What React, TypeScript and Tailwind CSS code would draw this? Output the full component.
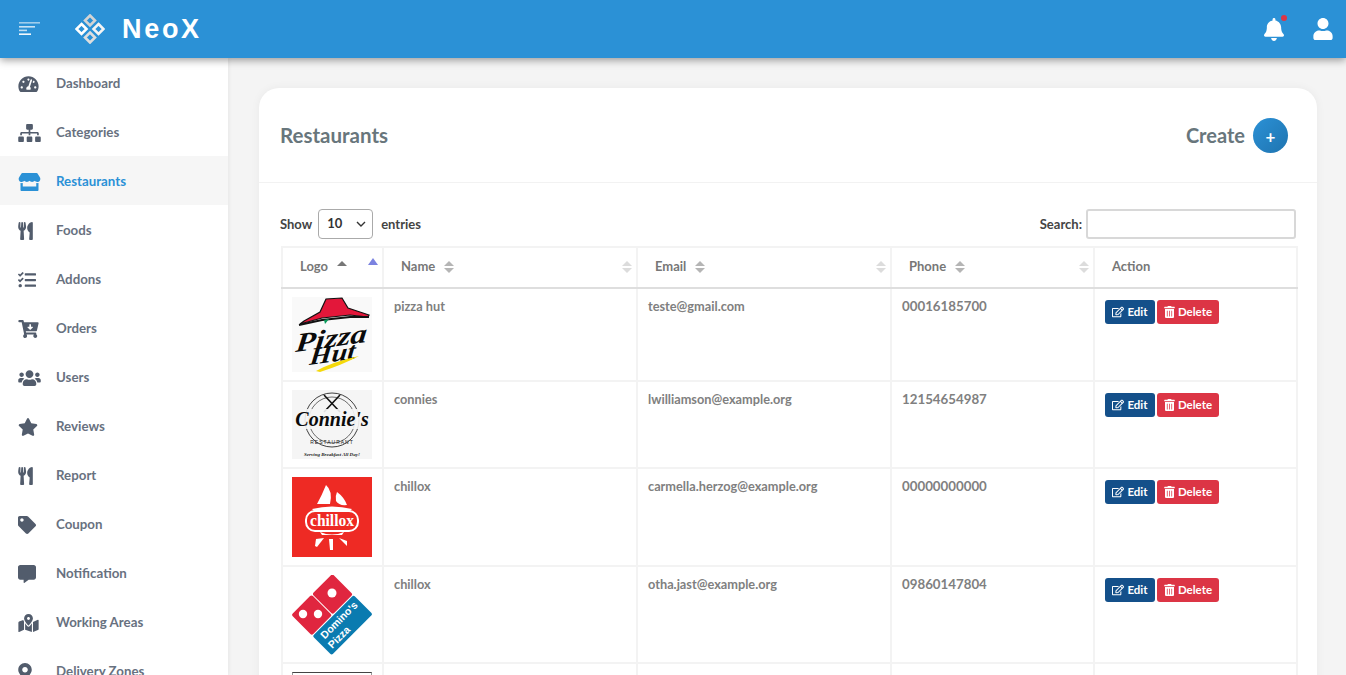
import React from "react";
import {
  FaTachometerAlt, FaSitemap, FaStore, FaUtensils, FaTasks, FaCartArrowDown, FaUsers, FaStar,
  FaTag, FaCommentAlt, FaMapMarkedAlt, FaMapMarkerAlt, FaBell, FaUser, FaRegEdit, FaTrashAlt,
} from "react-icons/fa";

const nav: [string, React.ComponentType<{ className?: string }>, string, boolean?][] = [
  ["Dashboard", FaTachometerAlt, "w-[21px]"],
  ["Categories", FaSitemap, "w-[23px]"],
  ["Restaurants", FaStore, "w-[23px]", true],
  ["Foods", FaUtensils, "w-[15px]"],
  ["Addons", FaTasks, "w-[18px]"],
  ["Orders", FaCartArrowDown, "w-[21px]"],
  ["Users", FaUsers, "w-[23px]"],
  ["Reviews", FaStar, "w-[20px]"],
  ["Report", FaUtensils, "w-[15px]"],
  ["Coupon", FaTag, "w-[18px]"],
  ["Notification", FaCommentAlt, "w-[18px]"],
  ["Working Areas", FaMapMarkedAlt, "w-[21px]"],
  ["Delivery Zones", FaMapMarkerAlt, "w-[14px]"],
];

function Sort({ up = "#b5b5b5", down = "#b5b5b5", w = 10 }: { up?: string; down?: string; w?: number }) {
  return (
    <svg width={w} height="12" viewBox="0 0 10 12" className="block">
      <path d="M5 0 L10 5 H0 Z" fill={up} />
      <path d="M5 12 L10 7 H0 Z" fill={down} />
    </svg>
  );
}

function Diamond() {
  const d = (x: number, y: number, c: string) => (
    <path d={`M${x} ${y - 5} L${x + 5} ${y} L${x} ${y + 5} L${x - 5} ${y} Z`} fill="none" stroke={c} strokeWidth="2.6" />
  );
  return (
    <svg width="30" height="30" viewBox="0 0 30 30">
      {d(15, 6.5, "#d4d4d4")}
      {d(23.5, 15, "#f4f4f4")}
      {d(15, 23.5, "#dedede")}
      {d(6.5, 15, "#ffffff")}
    </svg>
  );
}

function PizzaHut() {
  return (
    <svg width="80" height="75" viewBox="0 0 80 75" className="block">
      <rect width="80" height="75" fill="#f9f9f9" />
      <path d="M12 24 L28 15 L34 2 L50 1 L56 11 L77 18 L76 20 L58 18 L30 21 L8 27 Z" fill="#e3173a" stroke="#111" strokeWidth="1.2" />
      <path d="M7 28 L30 23 L58 20 L77 20" fill="none" stroke="#111" strokeWidth="2" />
      <path d="M32 23 L37 22 L33 27 Z" fill="#0a9a5b" />
      <text transform="translate(3 55) rotate(-8) skewX(-14)" fontFamily="'Liberation Serif',serif" fontStyle="italic" fontWeight="700" fontSize="26" textLength="72" lengthAdjust="spacingAndGlyphs" fill="#0a0a0a">Pizza</text>
      <text transform="translate(17 68) rotate(-8) skewX(-14)" fontFamily="'Liberation Serif',serif" fontStyle="italic" fontWeight="700" fontSize="24" textLength="46" lengthAdjust="spacingAndGlyphs" fill="#0a0a0a">Hut</text>
      <path d="M24 74 Q40 65 67 59 Q50 68 28 75 Z" fill="#f5d90a" />
    </svg>
  );
}

function Connies() {
  return (
    <svg width="80" height="69" viewBox="0 0 80 69" className="block">
      <rect width="80" height="69" fill="#f5f5f5" />
      <circle cx="40" cy="30" r="27" fill="none" stroke="#111" strokeWidth="0.8" />
      <circle cx="40" cy="30" r="23" fill="none" stroke="#111" strokeWidth="0.6" />
      <path d="M32 5 L48 22 M48 5 L32 22" stroke="#111" strokeWidth="1.6" />
      <rect x="0" y="19" width="80" height="20" fill="#f5f5f5" opacity="0.9" />
      <text x="40" y="36" textAnchor="middle" fontFamily="'Liberation Serif',serif" fontStyle="italic" fontWeight="700" fontSize="20" fill="#0a0a0a">Connie's</text>
      <text x="40" y="54" textAnchor="middle" fontFamily="'Liberation Sans',sans-serif" fontSize="5" letterSpacing="1" fill="#222">RESTAURANT</text>
      <text x="40" y="66" textAnchor="middle" fontFamily="'Liberation Serif',serif" fontStyle="italic" fontWeight="700" fontSize="5" fill="#222">Serving Breakfast All Day!</text>
    </svg>
  );
}

function Chillox() {
  return (
    <svg width="80" height="80" viewBox="0 0 80 80" className="block">
      <rect width="80" height="80" fill="#ee2a24" />
      <path d="M25 27 Q30 18 34 8 Q41 14 38 27 Z" fill="#fff" />
      <path d="M45 15 Q52 20 55 28 Q47 29 44 24 Q43 19 45 15 Z" fill="#fff" />
      <path d="M20 32 Q40 27 60 32 L56 36 L24 36 Z" fill="#fff" />
      <rect x="14" y="34" width="52" height="20" rx="9" fill="#ee2a24" stroke="#fff" strokeWidth="2" />
      <text x="40" y="49" textAnchor="middle" fontFamily="'Liberation Serif',serif" fontWeight="700" fontSize="16" textLength="44" lengthAdjust="spacingAndGlyphs" fill="#fff">chillox</text>
      <path d="M28 55 Q40 60 52 55 L50 58 L30 58 Z" fill="#fff" />
      <path d="M37 62 H41 L41 73 H38 Z" fill="#fff" />
      <path d="M24 62 L32 61 L25 70 L23 69 Z" fill="#fff" />
      <path d="M47 61 L55 64 L55 69 Z" fill="#fff" />
    </svg>
  );
}

function Dominos() {
  return (
    <svg width="80" height="80" viewBox="0 0 80 80" className="block">
      <g transform="rotate(-45 40 39.5)">
        <rect x="11" y="11" width="28.5" height="29" rx="2" fill="#e0263f" />
        <rect x="40.5" y="11" width="28.5" height="29" rx="2" fill="#e0263f" />
        <rect x="11" y="41" width="58" height="27" rx="2" fill="#0a7bb0" />
        <text x="41" y="52" textAnchor="middle" fontFamily="'Liberation Sans',sans-serif" fontWeight="700" fontSize="10.5" fill="#fff">Domino's</text>
        <text x="29" y="64" textAnchor="middle" fontFamily="'Liberation Sans',sans-serif" fontWeight="700" fontSize="10.5" fill="#fff">Pizza</text>
      </g>
      <circle cx="40" cy="18" r="4.5" fill="#fff" />
      <circle cx="11" cy="39" r="4.2" fill="#fff" />
      <circle cx="26" cy="39" r="4.2" fill="#fff" />
    </svg>
  );
}

const rows: { h: string; logo: React.ReactNode; name: string; email: string; phone: string }[] = [
  { h: "h-[93px]", logo: <PizzaHut />, name: "pizza hut", email: "teste@gmail.com", phone: "00016185700" },
  { h: "h-[87px]", logo: <Connies />, name: "connies", email: "lwilliamson@example.org", phone: "12154654987" },
  { h: "h-[98px]", logo: <Chillox />, name: "chillox", email: "carmella.herzog@example.org", phone: "00000000000" },
  { h: "h-[97px]", logo: <Dominos />, name: "chillox", email: "otha.jast@example.org", phone: "09860147804" },
];

function Th({ label, first }: { label: string; first?: boolean }) {
  return (
    <th className="relative border-2 border-[#f3f3f3] border-b-[#dedede] pl-[17px] text-left align-middle text-[13px] font-bold text-[#777]">
      <span className="flex items-center gap-[9px] pb-[2px]">
        {label}
        {first ? (
          <svg width="10" height="6" viewBox="0 0 10 6" className="mb-[6px] block"><path d="M5 0 L10 5 H0 Z" fill="#777" /></svg>
        ) : (
          <Sort />
        )}
      </span>
      {first ? (
        <span className="absolute right-[4px] top-[10px]">
          <svg width="10" height="8" viewBox="0 0 10 8" className="block"><path d="M5 0 L10 7 H0 Z" fill="#7b83e0" /></svg>
        </span>
      ) : (
        <span className="absolute right-[4px] top-[13px]">
          <Sort up="#dcdcdc" down="#dcdcdc" />
        </span>
      )}
    </th>
  );
}

export default function App() {
  return (
    <div className="flex h-screen flex-col overflow-hidden bg-[#f4f4f4] font-['Lato','Noto_Sans',sans-serif]">
      <header className="relative z-20 flex h-[58px] shrink-0 items-center bg-[#2b91d6] shadow-[0_2px_8px_rgba(0,0,0,0.4)]">
        <svg width="22" height="14" viewBox="0 0 22 14" className="ml-[19px] block">
          <rect x="0" y="0" width="21" height="1.6" fill="#fff" opacity="0.55" />
          <rect x="0" y="4" width="16" height="1.6" fill="#fff" opacity="0.75" />
          <rect x="0" y="7.6" width="8" height="1.6" fill="#fff" opacity="0.7" />
          <rect x="0" y="11.4" width="12" height="1.6" fill="#fff" opacity="0.95" />
        </svg>
        <span className="ml-[34px]"><Diamond /></span>
        <span className="ml-[17px] font-['Liberation_Sans',sans-serif] text-[27px] leading-none font-bold tracking-[2.7px] text-white">NeoX</span>
        <span className="relative ml-auto">
          <FaBell className="block h-[23px] w-[20px] text-white" />
          <span className="absolute -right-[3px] -top-[3px] h-[6px] w-[6px] rounded-full bg-[#dc3545]" />
        </span>
        <FaUser className="ml-[29px] mr-[13px] block h-[22px] w-[20px] text-white" />
      </header>
      <div className="flex min-h-0 flex-1">
        <aside className="z-10 w-[228px] shrink-0 overflow-hidden bg-white shadow-[1px_0_4px_rgba(0,0,0,0.06)]">
          {nav.map(([label, Icon, iw, active]) => (
            <div key={label} className={`flex h-[49px] items-center pl-[18px] pt-[2px] text-[13.3px] font-bold ${active ? "bg-[#f6f6f6] text-[#2b91d6]" : "text-[#68717f]"}`}>
              <span className="w-[38px]"><Icon className={`block h-[18px] ${iw} ${active ? "text-[#2b91d6]" : "text-[#525c6c]"}`} /></span>
              <span>{label}</span>
            </div>
          ))}
        </aside>
        <main className="min-w-0 flex-1 overflow-hidden pl-[31px] pr-[29px] pt-[30px]">
          <section className="h-[700px] rounded-t-[20px] bg-white shadow-[0_0_10px_rgba(0,0,0,0.05)]">
            <div className="flex h-[95px] items-center border-b border-[#f2f2f2] pl-[21px] pr-[29px]">
              <h1 className="text-[20.5px] font-bold text-[#68767c]">Restaurants</h1>
              <span className="ml-auto text-[20px] font-bold text-[#68767c]">Create</span>
              <span className="ml-[8px] flex h-[35px] w-[35px] items-center justify-center rounded-full bg-gradient-to-br from-[#2b91d6] to-[#1f74b0] pt-[2px] text-[17px] leading-none font-bold text-white">+</span>
            </div>
            <div className="pl-[21px] pr-[21px] pt-[26px]">
              <div className="flex h-[30px] items-center text-[13px] font-bold text-[#444]">
                <span className="pt-[1px]">Show</span>
                <span className="ml-[6px] flex h-[30px] w-[55px] items-center justify-between rounded-[4px] border border-[#aaa] pl-[8px] pr-[6px] text-[13px] text-[#333]">
                  10
                  <svg width="10" height="6" viewBox="0 0 10 6" className="block"><path d="M1 1 L5 5 L9 1" fill="none" stroke="#333" strokeWidth="1.4" /></svg>
                </span>
                <span className="ml-[8px] pt-[1px]">entries</span>
                <span className="ml-auto pt-[1px]">Search:</span>
                <span className="ml-[4px] block h-[30px] w-[210px] rounded-[3px] border-2 border-[#d8d8d8] bg-white" />
              </div>
              <table className="ml-[1px] mt-[7px] w-[1015px] table-fixed border-collapse">
                <colgroup>
                  <col className="w-[101px]" />
                  <col className="w-[254px]" />
                  <col className="w-[254px]" />
                  <col className="w-[203px]" />
                  <col className="w-[203px]" />
                </colgroup>
                <thead>
                  <tr className="h-[41px]">
                    <Th label="Logo" first />
                    <Th label="Name" />
                    <Th label="Email" />
                    <Th label="Phone" />
                    <th className="border-2 border-[#f3f3f3] border-b-[#dedede] pb-[2px] pl-[17px] text-left text-[13px] font-bold text-[#777]">Action</th>
                  </tr>
                </thead>
                <tbody>
                  {rows.map((r) => (
                    <tr key={r.email} className={r.h}>
                      <td className="border-2 border-[#f3f3f3] pl-[9px] align-middle">{r.logo}</td>
                      <td className="border-2 border-[#f3f3f3] pl-[10px] pt-[8px] align-top text-[12.75px] leading-[18px] font-bold text-[#808080]">{r.name}</td>
                      <td className="border-2 border-[#f3f3f3] pl-[10px] pt-[8px] align-top text-[12.75px] leading-[18px] font-bold text-[#808080]">{r.email}</td>
                      <td className="border-2 border-[#f3f3f3] pl-[10px] pt-[8px] align-top text-[13.3px] leading-[18px] font-bold text-[#808080]">{r.phone}</td>
                      <td className="border-2 border-[#f3f3f3] pl-[10px] pt-[11px] align-top">
                        <div className="flex gap-[2px] text-[11.5px] font-bold text-white">
                          <span className="flex h-[24px] w-[50px] items-center justify-center gap-[3px] rounded-[3px] bg-[#14508a]"><FaRegEdit className="h-[12px] w-[12px]" />Edit</span>
                          <span className="flex h-[24px] w-[62px] items-center justify-center gap-[3px] rounded-[3px] bg-[#dc3545]"><FaTrashAlt className="h-[12px] w-[11px]" />Delete</span>
                        </div>
                      </td>
                    </tr>
                  ))}
                  <tr className="h-[97px]">
                    <td className="border-2 border-[#f3f3f3] pl-[9px] pt-[8px] align-top">
                      <div className="h-[60px] w-[80px] border-x border-t border-x-[#999] border-t-[#444]" />
                    </td>
                    <td className="border-2 border-[#f3f3f3]" />
                    <td className="border-2 border-[#f3f3f3]" />
                    <td className="border-2 border-[#f3f3f3]" />
                    <td className="border-2 border-[#f3f3f3]" />
                  </tr>
                </tbody>
              </table>
            </div>
          </section>
        </main>
      </div>
    </div>
  );
}
